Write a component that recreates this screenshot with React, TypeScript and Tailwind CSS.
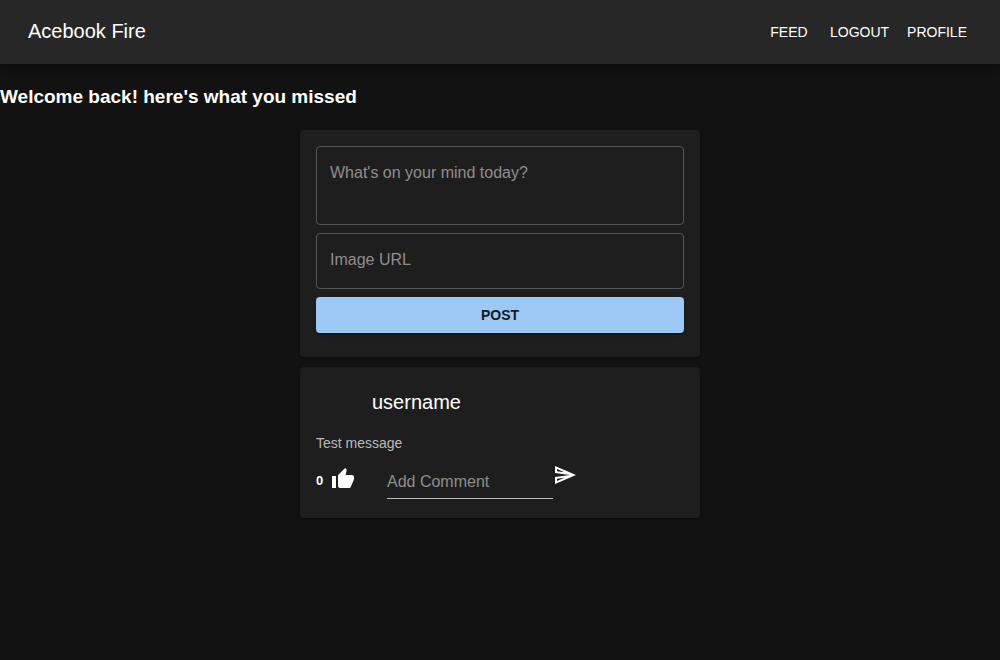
import { MdOutlineSend, MdThumbUp } from "react-icons/md";

const links = ["Feed", "Logout", "Profile"];

function NavBar() {
  return (
    <header className="relative flex h-16 items-center justify-between bg-[#272727] pr-6 pl-7 shadow-[0_2px_4px_-1px_rgba(0,0,0,0.2),0_4px_5px_rgba(0,0,0,0.14),0_1px_10px_rgba(0,0,0,0.12)]">
      <div className="pb-0.5 text-xl">Acebook Fire</div>
      <nav className="flex">
        {links.map((link) => (
          <a key={link} href={`#${link.toLowerCase()}`} className="min-w-16 px-[9px] py-1.5 text-center text-sm leading-6 uppercase">
            {link}
          </a>
        ))}
      </nav>
    </header>
  );
}

function PostForm() {
  return (
    <form
      onSubmit={(event) => event.preventDefault()}
      className="flex flex-col gap-2 rounded bg-[#1e1e1e] px-4 pt-4 pb-6 shadow-[0_2px_1px_-1px_rgba(0,0,0,0.2),0_1px_1px_rgba(0,0,0,0.14),0_1px_3px_rgba(0,0,0,0.12)]"
    >
      <textarea
        aria-label="What's on your mind today?"
        placeholder="What's on your mind today?"
        className="block h-[79px] w-full resize-none rounded border border-[#565656] bg-transparent px-[13px] py-[14px] text-base leading-6 outline-none placeholder:text-[#8e8e8e] focus:border-[#9bc8f5]"
      />
      <input
        type="text"
        aria-label="Image URL"
        placeholder="Image URL"
        className="h-14 w-full rounded border border-[#565656] bg-transparent px-[13px] pb-0.5 text-base outline-none placeholder:text-[#8e8e8e] focus:border-[#9bc8f5]"
      />
      <button
        type="submit"
        className="h-9 w-full cursor-pointer rounded bg-[#9bc8f5] text-sm font-bold text-[#15191d] shadow-[0_3px_1px_-2px_rgba(0,0,0,0.2),0_2px_2px_rgba(0,0,0,0.14),0_1px_5px_rgba(0,0,0,0.12)]"
      >
        POST
      </button>
    </form>
  );
}

function Post({ username, message, likes }: { username: string; message: string; likes: number }) {
  return (
    <article className="rounded bg-[#1e1e1e] px-4 pt-4 pb-[19px] shadow-[0_2px_1px_-1px_rgba(0,0,0,0.2),0_1px_1px_rgba(0,0,0,0.14),0_1px_3px_rgba(0,0,0,0.12)]">
      <div className="flex h-10 items-center gap-4">
        <div className="size-10 rounded-full" />
        <h2 className="pb-0.5 text-xl">{username}</h2>
      </div>
      <p className="mt-2.5 text-sm leading-5 text-[#bababa]">{message}</p>
      <div className="mt-2.5 flex items-start">
        <span className="mt-2 w-[15px] text-[13px] leading-5 font-bold">{likes}</span>
        <button type="button" aria-label="Like" className="mt-1 cursor-pointer">
          <MdThumbUp size={24} />
        </button>
        <input
          type="text"
          aria-label="Add Comment"
          placeholder="Add Comment"
          className="ml-8 h-9 w-[166px] border-b border-[#bcbcbc] bg-transparent pt-0.5 text-base outline-none placeholder:text-[#8e8e8e]"
        />
        <button type="button" aria-label="Send comment" className="cursor-pointer">
          <MdOutlineSend size={24} />
        </button>
      </div>
    </article>
  );
}

export default function App() {
  return (
    <div className="min-h-screen bg-[#121212] font-['Liberation_Sans',Arial,sans-serif] text-white">
      <NavBar />
      <main>
        <h1 className="pt-[21px] text-[19px] leading-6 font-bold">Welcome back! here's what you missed</h1>
        <div className="mx-auto mt-[21px] flex max-w-[400px] flex-col gap-2.5">
          <PostForm />
          <Post username="username" message="Test message" likes={0} />
        </div>
      </main>
    </div>
  );
}
